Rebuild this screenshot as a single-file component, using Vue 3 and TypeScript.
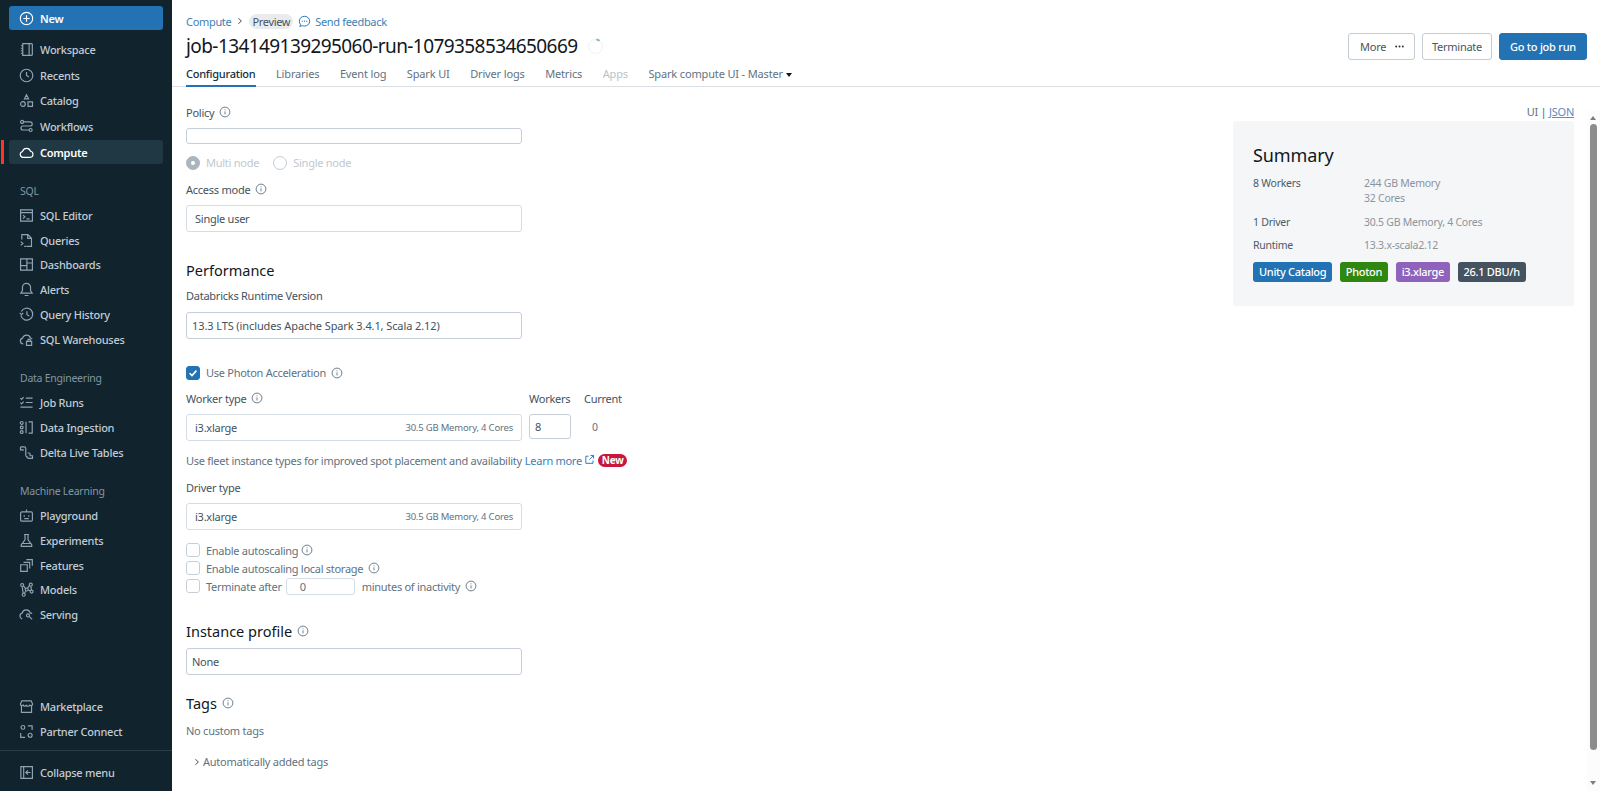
<script setup lang="ts">
type Item = { label: string; icon: string; active?: boolean }
type Group = { title?: string; items: Item[]; cls?: string }

const icons: Record<string, string> = {
  workspace: 'M4 1.8h9.5a.7.7 0 0 1 .7.7v11a.7.7 0 0 1-.7.7H4zM10.8 1.8v12.4M4 4H2M4 6.7H2M4 9.3H2M4 12H2',
  recents: 'M8 1.3a6.7 6.7 0 1 0 0 13.4A6.7 6.7 0 0 0 8 1.3zM8 4.3V8l2.6 1.6',
  catalog: 'M8 1.8 10.2 6.2H5.8zM4.2 9.2a2.5 2.5 0 1 0 0 5 2.5 2.5 0 0 0 0-5zM9.6 9.4h4.8v4.8H9.6z',
  workflows: 'M3.3 1.5a1.6 1.6 0 1 0 0 3.2 1.6 1.6 0 0 0 0-3.2zM4.9 3.1h7a2 2 0 0 1 0 4.4H4.2a2.1 2.1 0 0 0 0 4.2h6.6M12.4 10.1a1.6 1.6 0 1 0 0 3.2 1.6 1.6 0 0 0 0-3.2z',
  compute: 'M4.3 13.2a3.2 3.2 0 0 1-.5-6.3 4.4 4.4 0 0 1 8.5-.2 3.3 3.3 0 0 1-.3 6.5z',
  editor: 'M1.7 2h12.6v12H1.7zM1.7 5h12.6M4.3 7.6l2 1.8-2 1.8M8 11.6h3.3',
  queries: 'M3 7V1.8h6.5l3.8 3.8v8.6H8.5M9.3 1.8v4h4M1.8 9.2l2.4 2-2.4 2M5.6 14.3h2.4',
  dashboards: 'M1.7 2h12.6v12H1.7zM8.4 2v12M1.7 9.2h6.7M8.4 6.4h5.9',
  alerts: 'M8 1.4a4.3 4.3 0 0 0-4.3 4.3v3.4L2 11.8h12l-1.7-2.7V5.7A4.3 4.3 0 0 0 8 1.4zM6 14.4h4',
  history: 'M2.5 4.8A6.4 6.4 0 1 1 2 9M.8 6.3l1.9 1.8 1.8-1.8M8.5 4.6v3.6l2.5 1.5',
  warehouses: 'M4.5 12.7a3.1 3.1 0 0 1-.7-6.1 4.4 4.4 0 0 1 8.4-.2c.8.2 1.4.6 1.8 1.2M8 10h5.5v4.2H8zM9.4 10V9a1.4 1.4 0 0 1 2.8 0v1',
  jobs: 'M1.5 3.4l1.2 1.2L5 2.2M7.3 3.3h7.2M1.5 8.2l1.2 1.2L5 7M7.3 8h7.2M1.5 13h13',
  ingestion: 'M2.9 1.6a1.5 1.5 0 1 0 0 3 1.5 1.5 0 0 0 0-3zM2.9 6.5a1.5 1.5 0 1 0 0 3 1.5 1.5 0 0 0 0-3zM2.9 11.4a1.5 1.5 0 1 0 0 3 1.5 1.5 0 0 0 0-3zM7.5 1.8v12.4M10.3 2h3.8v12h-3.8',
  dlt: 'M1.6 2h4.2a1.4 1.4 0 0 1 1.4 1.4v7.2a2 2 0 0 0 2 2M1.6 2v3.2h2.8v1M9.2 8.5h1.6a1 1 0 0 1 1 1v2h2.6v2.8h-3.8a2.4 2.4 0 0 1-2.4-2.4',
  playground: 'M3 4.2h10a1.3 1.3 0 0 1 1.3 1.3v7.2a1.3 1.3 0 0 1-1.3 1.3H3a1.3 1.3 0 0 1-1.3-1.3V5.5A1.3 1.3 0 0 1 3 4.2zM8 4.2V1.6M5.6 7.6v1.8M10.4 7.6v1.8M5.6 11.4h4.8',
  experiments: 'M5.3 1.6h5.4M6.4 1.6v5.6l-4 5.2v1.9h11.2v-1.9l-4-5.2V1.6M3.5 11.2h9',
  features: 'M1.8 7.2h7v7h-7zM4.8 4.6h6.6v6.6M7.8 1.8h6.4v6.4',
  models: 'M3.4 1.6a1.6 1.6 0 1 0 0 3.2 1.6 1.6 0 0 0 0-3.2zM12.6 1.2a1.6 1.6 0 1 0 0 3.2 1.6 1.6 0 0 0 0-3.2zM8.2 6.4a1.6 1.6 0 1 0 0 3.2 1.6 1.6 0 0 0 0-3.2zM13.4 8.6a1.6 1.6 0 1 0 0 3.2 1.6 1.6 0 0 0 0-3.2zM5 12a1.6 1.6 0 1 0 0 3.2A1.6 1.6 0 0 0 5 12zM4.8 4l2.2 3M11.3 3.5 9.3 6.6M9.7 8.5l2.2.9M7.4 9.4l-1.7 2.8M12.6 4.4l.7 4.2M3.4 4.8l1 7.2',
  serving: 'M3.4 12.7A3.2 3.2 0 0 1 3.4 6.5a4.4 4.4 0 0 1 8.5-.3 3 3 0 0 1 2 1M8 9a1.6 1.6 0 1 0 3.2 0A1.6 1.6 0 0 0 8 9zM11 10.2l3 3',
  marketplace: 'M3 2h10l1.5 3.4a1.6 1.6 0 0 1-3.1.6 1.7 1.7 0 0 1-3.4 0 1.7 1.7 0 0 1-3.4 0 1.6 1.6 0 0 1-3.1-.6zM2.6 7.4v6.8h10.8V7.4',
  partner: 'M4.2 1.6a2 2 0 1 0 0 4 2 2 0 0 0 0-4zM9.4 2h4.6v4.4M1.8 9.5v4.7h4.7M11.9 9.9a2.1 2.1 0 1 0 0 4.2 2.1 2.1 0 0 0 0-4.2z',
  collapse: 'M2 1.8h12.3v12.4H2zM5 1.8v12.4M12.3 8H7.4M9.6 5.7 7.3 8l2.3 2.3',
}

const groups: Group[] = [
  { cls: 'wide', items: [
    { label: 'Workspace', icon: 'workspace' },
    { label: 'Recents', icon: 'recents' },
    { label: 'Catalog', icon: 'catalog' },
    { label: 'Workflows', icon: 'workflows' },
    { label: 'Compute', icon: 'compute', active: true },
  ] },
  { title: 'SQL', items: [
    { label: 'SQL Editor', icon: 'editor' },
    { label: 'Queries', icon: 'queries' },
    { label: 'Dashboards', icon: 'dashboards' },
    { label: 'Alerts', icon: 'alerts' },
    { label: 'Query History', icon: 'history' },
    { label: 'SQL Warehouses', icon: 'warehouses' },
  ] },
  { title: 'Data Engineering', items: [
    { label: 'Job Runs', icon: 'jobs' },
    { label: 'Data Ingestion', icon: 'ingestion' },
    { label: 'Delta Live Tables', icon: 'dlt' },
  ] },
  { title: 'Machine Learning', items: [
    { label: 'Playground', icon: 'playground' },
    { label: 'Experiments', icon: 'experiments' },
    { label: 'Features', icon: 'features' },
    { label: 'Models', icon: 'models' },
    { label: 'Serving', icon: 'serving' },
  ] },
]
const bottomItems: Item[] = [
  { label: 'Marketplace', icon: 'marketplace' },
  { label: 'Partner Connect', icon: 'partner' },
]
const tabs = ['Libraries', 'Event log', 'Spark UI', 'Driver logs', 'Metrics']
const badges = [
  { label: 'Unity Catalog', cls: 'b-blue' },
  { label: 'Photon', cls: 'b-green' },
  { label: 'i3.xlarge', cls: 'b-purple' },
  { label: '26.1 DBU/h', cls: 'b-slate' },
]
</script>

<template>
  <div class="page">
    <aside class="side">
      <button class="new-btn">
        <svg class="ico" viewBox="0 0 16 16"><circle cx="8" cy="8" r="6.6" /><path d="M8 4.6v6.8M4.6 8h6.8" /></svg>
        New
      </button>
      <nav class="groups">
        <div v-for="(g, i) in groups" :key="i" class="group" :class="g.cls">
          <div v-if="g.title" class="g-title">{{ g.title }}</div>
          <a v-for="it in g.items" :key="it.label" class="nav" :class="{ active: it.active }">
            <svg class="ico" viewBox="0 0 16 16"><path :d="icons[it.icon]" /></svg>
            {{ it.label }}
          </a>
        </div>
      </nav>
      <div class="bottom">
        <a v-for="it in bottomItems" :key="it.label" class="nav">
          <svg class="ico" viewBox="0 0 16 16"><path :d="icons[it.icon]" /></svg>
          {{ it.label }}
        </a>
      </div>
      <div class="collapse">
        <a class="nav">
          <svg class="ico" viewBox="0 0 16 16"><path :d="icons.collapse" /></svg>
          Collapse menu
        </a>
      </div>
    </aside>

    <main class="main">
      <header class="head">
        <div class="head-top">
          <div>
            <div class="crumbs">
              <a class="link">Compute</a>
              <svg class="chev" viewBox="0 0 8 8"><path d="M2.5 1.2 5.3 4 2.5 6.8" /></svg>
              <span class="pill">Preview</span>
              <svg class="fb" viewBox="0 0 16 16"><path d="M8 1.6c-3.6 0-6.4 2.6-6.4 6 0 1.5.5 2.8 1.5 3.9l-.8 2.6 3-1a7 7 0 0 0 2.7.5c3.6 0 6.4-2.6 6.4-6s-2.8-6-6.4-6z" /><circle class="dot" cx="5.2" cy="7.6" r=".7" /><circle class="dot" cx="8" cy="7.6" r=".7" /><circle class="dot" cx="10.8" cy="7.6" r=".7" /></svg>
              <a class="link">Send feedback</a>
            </div>
            <div class="title-row">
              <h1>job-134149139295060-run-1079358534650669</h1>
              <span class="spinner"></span>
            </div>
          </div>
          <div class="actions">
            <button class="btn more">More <svg class="dots" viewBox="0 0 10 3"><circle cx="1.3" cy="1.5" r="1.1" /><circle cx="5" cy="1.5" r="1.1" /><circle cx="8.7" cy="1.5" r="1.1" /></svg></button>
            <button class="btn term">Terminate</button>
            <button class="btn primary">Go to job run</button>
          </div>
        </div>
        <div class="tabs">
          <a class="tab on">Configuration</a>
          <a v-for="t in tabs" :key="t" class="tab">{{ t }}</a>
          <a class="tab off">Apps</a>
          <a class="tab">Spark compute UI - Master <i class="caret"></i></a>
        </div>
      </header>

      <div class="body">
        <form class="form" @submit.prevent>
          <label class="lbl first">Policy <svg class="inf" viewBox="0 0 12 12"><circle cx="6" cy="6" r="4.9" /><path d="M6 5.4v3M6 3.4v.9" /></svg></label>
          <div class="field policy"></div>

          <div class="radios">
            <span class="radio checked"></span><span class="r-text">Multi node</span>
            <span class="radio"></span><span class="r-text">Single node</span>
          </div>

          <label class="lbl access">Access mode <svg class="inf" viewBox="0 0 12 12"><circle cx="6" cy="6" r="4.9" /><path d="M6 5.4v3M6 3.4v.9" /></svg></label>
          <div class="field tall soft">Single user</div>

          <h2 class="perf">Performance</h2>
          <label class="lbl runtime">Databricks Runtime Version</label>
          <div class="field tall tight">13.3 LTS (includes Apache Spark 3.4.1, Scala 2.12)</div>

          <div class="check-row photon">
            <span class="check on"><svg viewBox="0 0 12 12"><path d="M2.6 6.2 5 8.6l4.4-5" /></svg></span>
            <span>Use Photon Acceleration</span>
            <svg class="inf" viewBox="0 0 12 12"><circle cx="6" cy="6" r="4.9" /><path d="M6 5.4v3M6 3.4v.9" /></svg>
          </div>

          <div class="worker-grid">
            <label class="lbl">Worker type <svg class="inf" viewBox="0 0 12 12"><circle cx="6" cy="6" r="4.9" /><path d="M6 5.4v3M6 3.4v.9" /></svg></label>
            <label class="lbl">Workers</label>
            <label class="lbl">Current</label>
            <div class="field tall soft between"><span>i3.xlarge</span><small>30.5 GB Memory, 4 Cores</small></div>
            <div class="field num">8</div>
            <div class="cur">0</div>
          </div>

          <div class="fleet">
            <span>Use fleet instance types for improved spot placement and availability</span>
            <a class="link">Learn more</a>
            <svg class="ext" viewBox="0 0 12 12"><path d="M5 2.4H2v7.8h7.8V7M7 1.6h3.4V5M10.2 1.8 5.8 6.2" /></svg>
            <span class="new-tag">New</span>
          </div>

          <label class="lbl driver">Driver type</label>
          <div class="field tall soft between"><span>i3.xlarge</span><small>30.5 GB Memory, 4 Cores</small></div>

          <div class="checks">
            <div class="check-row">
              <span class="check"></span><span>Enable autoscaling</span>
              <svg class="inf n" viewBox="0 0 12 12"><circle cx="6" cy="6" r="4.9" /><path d="M6 5.4v3M6 3.4v.9" /></svg>
            </div>
            <div class="check-row">
              <span class="check"></span><span>Enable autoscaling local storage</span>
              <svg class="inf w" viewBox="0 0 12 12"><circle cx="6" cy="6" r="4.9" /><path d="M6 5.4v3M6 3.4v.9" /></svg>
            </div>
            <div class="check-row">
              <span class="check"></span><span>Terminate after</span>
              <span class="mini">0</span>
              <span>minutes of inactivity</span>
              <svg class="inf w" viewBox="0 0 12 12"><circle cx="6" cy="6" r="4.9" /><path d="M6 5.4v3M6 3.4v.9" /></svg>
            </div>
          </div>

          <h2 class="profile">Instance profile <svg class="inf" viewBox="0 0 12 12"><circle cx="6" cy="6" r="4.9" /><path d="M6 5.4v3M6 3.4v.9" /></svg></h2>
          <div class="field tall">None</div>

          <h2 class="tags">Tags <svg class="inf" viewBox="0 0 12 12"><circle cx="6" cy="6" r="4.9" /><path d="M6 5.4v3M6 3.4v.9" /></svg></h2>
          <div class="none">No custom tags</div>
          <div class="auto">
            <svg class="chev" viewBox="0 0 8 8"><path d="M2.5 1.2 5.3 4 2.5 6.8" /></svg>
            Automatically added tags
          </div>
        </form>

        <aside class="right">
          <div class="switch">UI <span class="bar">|</span> <a class="json">JSON</a></div>
          <section class="summary">
            <h3>Summary</h3>
            <dl>
              <dt>8 Workers</dt><dd>244 GB Memory<br />32 Cores</dd>
              <dt>1 Driver</dt><dd>30.5 GB Memory, 4 Cores</dd>
              <dt>Runtime</dt><dd>13.3.x-scala2.12</dd>
            </dl>
            <div class="badges">
              <span v-for="b in badges" :key="b.label" class="badge" :class="b.cls">{{ b.label }}</span>
            </div>
          </section>
        </aside>

        <div class="scroll">
          <i class="arrow"></i>
          <i class="thumb"></i>
          <i class="arrow down"></i>
        </div>
      </div>
    </main>
  </div>
</template>

<style>
html, body { margin: 0; height: 100%; overflow: hidden; background: #fff; }
</style>

<style scoped>
.page {
  display: flex;
  height: 791px;
  font-family: "Noto Sans", "Open Sans", sans-serif;
  font-size: 11px;
  letter-spacing: -0.25px;
  color: #5f7281;
}
* { box-sizing: border-box; }
.side {
  width: 172px;
  flex: none;
  background: #11232c;
  display: flex;
  flex-direction: column;
  padding-top: 6px;
  color: #c1ccd6;
}
.new-btn {
  margin: 0 9px 0 9px;
  height: 24px;
  border: 0;
  border-radius: 3px;
  background: #2272b4;
  color: #fff;
  font: 600 11px "Noto Sans", sans-serif;
  letter-spacing: -0.25px;
  display: flex;
  align-items: center;
  gap: 6px;
  padding: 0 10px;
}
.ico { width: 15px; height: 15px; flex: none; fill: none; stroke: #92a4b3; stroke-width: 1.25; }
.new-btn .ico { stroke: #fff; }
.groups { display: flex; flex-direction: column; margin-top: 7px; }
.group + .group { margin-top: 14.5px; }
.g-title { height: 24px; line-height: 24px; padding-left: 20px; color: #8296a5; font-size: 10.5px; margin-bottom: 0; }
.nav {
  display: flex;
  align-items: center;
  gap: 6px;
  height: 24.8px;
  margin: 0 9px;
  padding-left: 10px;
  border-radius: 3px;
  font-weight: 500;
  font-size: 11px;
  position: relative;
}
.wide .nav { height: 25.5px; }
.wide .nav.active { background: #1f3844; color: #fff; font-weight: 600; height: 24px; margin-top: 1px; margin-bottom: .5px; }
.nav.active .ico { stroke: #fff; }
.nav.active::before { content: ""; position: absolute; left: -8px; top: 0; bottom: 0; width: 3px; background: #ff3621; }
.bottom { margin-top: auto; padding-bottom: 6px; }
.bottom .nav { height: 25px; }
.collapse { border-top: 1px solid #2a3d47; padding: 9px 0 6px; }

.main { flex: 1; min-width: 0; display: flex; flex-direction: column; }
.head { padding: 0 13px 0 14px; border-bottom: 1px solid #dce0e4; height: 87px; flex: none; }
.head-top { display: flex; justify-content: space-between; align-items: flex-start; height: 63px; }
.crumbs { display: flex; align-items: center; height: 18px; margin-top: 12px; font-size: 11px; letter-spacing: -0.32px; }
.link { color: #2272b4; }
.crumbs .link { color: #3d7fb5; }
.chev { width: 8px; height: 8px; flex: none; fill: none; stroke: #3b4b57; stroke-width: 1; }
.crumbs .chev { margin: 0 5px; }
.pill { background: #e9ecef; color: #44545f; padding: 0 3px; border-radius: 8px; line-height: 15px; height: 15px; }
.fb { width: 13px; height: 13px; margin: 0 4px 0 5px; fill: none; stroke: #2272b4; stroke-width: 1.2; }
.fb .dot { fill: #2272b4; stroke: none; }
.title-row { display: flex; align-items: center; margin-top: 3px; }
h1 { margin: 0; font-size: 19px; font-weight: 400; color: #11171c; line-height: 26px; letter-spacing: -0.58px; }
.spinner { width: 15px; height: 15px; margin-left: 11px; border-radius: 50%; border: 1px solid #eef1f3; position: relative; }
.spinner::after { content: ""; position: absolute; top: -1px; left: 7px; width: 4px; height: 2px; background: #8fbf8f; border-radius: 1px; transform: rotate(25deg); }
.actions { display: flex; gap: 7px; margin-top: 33px; }
.btn { height: 27px; border: 1px solid #c4ccd5; border-radius: 3px; background: #fff; color: #47555f; font: 400 11px "Noto Sans", sans-serif; letter-spacing: -0.25px; padding: 0; }
.btn.more { width: 67px; display: flex; align-items: center; justify-content: space-between; padding: 0 10px 0 11px; }
.btn.term { width: 70px; }
.dots { width: 9px; height: 3px; fill: #26333c; }
.btn.primary { background: #2272b4; border-color: #2272b4; color: #fff; font-weight: 500; width: 88px; }
.tabs { display: flex; gap: 20.5px; height: 24px; align-items: flex-start; }
.tab { height: 24px; line-height: 22px; color: #5f7281; font-size: 11px; white-space: nowrap; letter-spacing: -0.15px; }
.tab.on { color: #11323f; font-weight: 500; border-bottom: 2px solid #2272b4; letter-spacing: -0.25px; }
.tab.off { color: #b9c2c9; }
.caret { display: inline-block; border: 3.5px solid transparent; border-top: 4px solid #11171c; border-bottom: 0; vertical-align: 1px; }

.body { flex: 1; min-height: 0; display: flex; position: relative; padding-left: 14px; overflow: hidden; }
.form { width: 336px; flex: none; position: relative; }
.lbl { display: block; color: #44525d; font-size: 11px; line-height: 16px; white-space: nowrap; }
.first { margin-top: 18px; }
.inf { width: 12px; height: 12px; fill: none; stroke: #5f7281; stroke-width: .9; vertical-align: -1px; margin-left: 2px; }
.inf.w { margin-left: -1px; }
.inf.n { margin-left: -3px; }
.field {
  height: 15.5px;
  width: 336px;
  border: 1px solid #c6cfd9;
  border-radius: 3px;
  color: #44525d;
  padding: 0 5px;
  margin-top: 7px;
  display: flex;
  align-items: center;
  white-space: nowrap;
}
.policy { margin-top: 7px; }
.tall { height: 27px; }
.tight { letter-spacing: -0.1px; }
.soft { border-color: #d6dde5; padding-left: 8px; }
.between { justify-content: space-between; padding-right: 8px; }
.between small { font-size: 9.5px; color: #5f7281; letter-spacing: -0.2px; }
.radios { display: flex; align-items: center; margin-top: 11px; height: 16px; color: #c0c8cf; }
.radio { width: 14px; height: 14px; border-radius: 50%; border: 1px solid #c4ccd5; margin-right: 6px; flex: none; }
.radio.checked { background: #aab5be; border-color: #aab5be; position: relative; }
.radio.checked::after { content: ""; position: absolute; left: 4px; top: 4px; width: 4px; height: 4px; border-radius: 50%; background: #fff; }
.r-text { margin-right: 14px; }
.access { margin-top: 11.5px; }
.access + .field { margin-top: 6.5px; }
h2 { margin: 0; font-weight: 400; color: #11171c; font-size: 14.5px; line-height: 20px; letter-spacing: 0; }
.perf { margin-top: 28px; }
.runtime { margin-top: 8.5px; font-weight: 400; }
.runtime + .field { margin-top: 8px; }
.check-row { display: flex; align-items: center; gap: 6px; height: 18px; color: #5f7281; white-space: nowrap; letter-spacing: -0.28px; }
.check-row .inf { flex: none; }
.photon { margin-top: 24.5px; }
.photon .inf { margin-left: -1px; }
.check { width: 14px; height: 14px; border: 1px solid #c6cfd9; border-radius: 3px; flex: none; }
.check.on { background: #2272b4; border-color: #2272b4; display: flex; }
.check svg { fill: none; stroke: #fff; stroke-width: 1.6; width: 12px; height: 12px; }
.worker-grid { display: grid; grid-template-columns: 336px 42px 40px; column-gap: 7px; margin-top: 9px; width: 460px; }
.worker-grid .lbl { margin-bottom: 7px; }
.worker-grid .lbl:nth-child(3) { margin-left: 6px; }
.worker-grid .field { margin-top: 0; }
.num { width: 42px; height: 25px; padding-left: 5px; color: #44525d; }
.cur { padding-left: 14px; line-height: 26px; color: #5f7281; font-size: 10.5px; }
.fleet { margin-top: 12px; height: 16px; line-height: 16px; white-space: nowrap; width: 480px; display: flex; align-items: center; color: #5f7281; letter-spacing: -0.28px; }
.fleet .link { margin-left: 3px; color: #3d7fb5; }
.ext { width: 11px; height: 11px; flex: none; margin: 0 3px 3px 2px; fill: none; stroke: #2272b4; stroke-width: 1; }
.new-tag { background: #c7173a; color: #fff; font-weight: 700; font-size: 10px; line-height: 13px; height: 13px; padding: 0 4px; border-radius: 7px; }
.driver { margin-top: 11px; }
.driver + .field { margin-top: 7px; }
.checks { margin-top: 11.5px; display: flex; flex-direction: column; }
.mini { width: 69px; height: 17px; margin-left: -2px; margin-right: 1px; border: 1px solid #d6dde5; border-radius: 3px; padding-left: 13px; line-height: 15px; }
.profile { margin-top: 25.5px; display: flex; align-items: center; gap: 3px; }
.profile + .field { margin-top: 7px; }
.tags { margin-top: 18px; display: flex; align-items: center; gap: 3px; }
.none { margin-top: 9px; line-height: 18px; }
.auto { margin-top: 13.5px; padding-left: 7px; line-height: 18px; display: flex; align-items: center; gap: 2px; }

.right { margin-left: auto; width: 341px; margin-right: 26px; flex: none; }
.switch { text-align: right; height: 34px; padding-top: 17px; line-height: 16px; color: #5f7281; font-size: 11px; }
.bar { color: #2272b4; }
.json { color: #5b8bc0; text-decoration: underline; }
.summary { background: #f5f6f8; border-radius: 3px; height: 185px; padding: 21px 20px 20px; }
h3 { margin: 0 0 8px; font-size: 18px; font-weight: 400; color: #11171c; line-height: 26px; letter-spacing: -0.1px; }
dl { margin: 0; display: grid; grid-template-columns: 111px 1fr; row-gap: 8.5px; line-height: 15px; font-size: 10.5px; }
dt { color: #4c5a65; }
dd { margin: 0; color: #8a949c; }
.badges { display: flex; gap: 7.5px; margin-top: 9px; }
.badge { height: 20px; line-height: 20px; padding: 0 6px; border-radius: 3px; color: #fff; font-size: 11px; font-weight: 500; white-space: nowrap; letter-spacing: -0.3px; }
.b-blue { background: #2272b4; }
.b-green { background: #2f8710; }
.b-purple { background: #8f62bb; }
.b-slate { background: #44535f; }

.scroll { position: absolute; right: 0; top: 24px; bottom: 0; width: 13px; background: #fcfcfc; }
.arrow { position: absolute; left: 3px; top: 5px; border: 3.5px solid transparent; border-bottom: 4px solid #7d7d7d; border-top: 0; }
.arrow.down { top: auto; bottom: 6px; border-top: 4px solid #7d7d7d; border-bottom: 0; }
.thumb { position: absolute; left: 3px; top: 13px; bottom: 41px; width: 7px; background: #8c8c8c; border-radius: 4px; }
</style>
